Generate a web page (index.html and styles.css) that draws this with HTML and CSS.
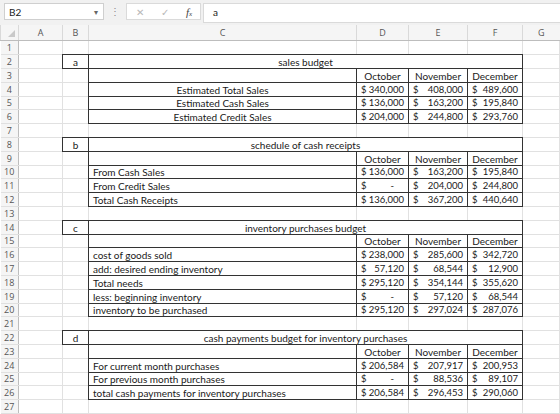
FILE: index.html
```html
<!DOCTYPE html>
<html lang="en">
<head>
    <meta charset="UTF-8">
    <title>Budget - Sheet1</title>
    <link rel="stylesheet" href="styles.css">
</head>
<body>
    <div class="formula-bar">
        <div class="name-box"><span>B2</span><span class="arrow">&#9662;</span></div>
        <div class="dots">&#8942;</div>
        <div class="fx-box">
            <span class="cancel">&#10005;</span>
            <span class="enter">&#10003;</span>
            <span class="fx"><i>f</i><sub>x</sub></span>
        </div>
        <div class="formula-input">a</div>
    </div>

    <table class="sheet">
        <colgroup>
            <col class="c-head">
            <col class="c-a">
            <col class="c-b">
            <col class="c-c">
            <col class="c-d">
            <col class="c-e">
            <col class="c-f">
            <col>
        </colgroup>
        <thead>
            <tr>
                <th class="corner"><span class="tri"></span></th>
                <th>A</th><th>B</th><th>C</th><th>D</th><th>E</th><th>F</th><th>G</th>
            </tr>
        </thead>
        <tbody>
            <tr><th>1</th><td></td><td></td><td></td><td></td><td></td><td></td><td></td></tr>

            <!-- a: sales budget -->
            <tr><th>2</th><td></td><td class="bx ctr">a</td><td class="bx ctr" colspan="4">sales budget</td><td></td></tr>
            <tr><th>3</th><td></td><td></td><td class="bx"></td><td class="bx ctr">October</td><td class="bx ctr">November</td><td class="bx ctr">December</td><td></td></tr>
            <tr><th>4</th><td></td><td></td><td class="bx ctr">Estimated Total Sales</td><td class="bx num"><span class="cur">$</span>340,000</td><td class="bx num"><span class="cur">$</span>408,000</td><td class="bx num"><span class="cur">$</span>489,600</td><td></td></tr>
            <tr><th>5</th><td></td><td></td><td class="bx ctr">Estimated Cash Sales</td><td class="bx num"><span class="cur">$</span>136,000</td><td class="bx num"><span class="cur">$</span>163,200</td><td class="bx num"><span class="cur">$</span>195,840</td><td></td></tr>
            <tr><th>6</th><td></td><td></td><td class="bx ctr">Estimated Credit Sales</td><td class="bx num"><span class="cur">$</span>204,000</td><td class="bx num"><span class="cur">$</span>244,800</td><td class="bx num"><span class="cur">$</span>293,760</td><td></td></tr>
            <tr><th>7</th><td></td><td></td><td></td><td></td><td></td><td></td><td></td></tr>

            <!-- b: schedule of cash receipts -->
            <tr><th>8</th><td></td><td class="bx ctr">b</td><td class="bx ctr" colspan="4">schedule of cash receipts</td><td></td></tr>
            <tr><th>9</th><td></td><td></td><td class="bx"></td><td class="bx ctr">October</td><td class="bx ctr">November</td><td class="bx ctr">December</td><td></td></tr>
            <tr><th>10</th><td></td><td></td><td class="bx lbl">From Cash Sales</td><td class="bx num"><span class="cur">$</span>136,000</td><td class="bx num"><span class="cur">$</span>163,200</td><td class="bx num"><span class="cur">$</span>195,840</td><td></td></tr>
            <tr><th>11</th><td></td><td></td><td class="bx lbl">From Credit Sales</td><td class="bx num"><span class="cur">$</span><span class="dash">-</span></td><td class="bx num"><span class="cur">$</span>204,000</td><td class="bx num"><span class="cur">$</span>244,800</td><td></td></tr>
            <tr><th>12</th><td></td><td></td><td class="bx lbl">Total Cash Receipts</td><td class="bx num"><span class="cur">$</span>136,000</td><td class="bx num"><span class="cur">$</span>367,200</td><td class="bx num"><span class="cur">$</span>440,640</td><td></td></tr>
            <tr><th>13</th><td></td><td></td><td></td><td></td><td></td><td></td><td></td></tr>

            <!-- c: inventory purchases budget -->
            <tr><th>14</th><td></td><td class="bx ctr">c</td><td class="bx ctr" colspan="4">inventory purchases budget</td><td></td></tr>
            <tr><th>15</th><td></td><td></td><td class="bx"></td><td class="bx ctr">October</td><td class="bx ctr">November</td><td class="bx ctr">December</td><td></td></tr>
            <tr><th>16</th><td></td><td></td><td class="bx lbl">cost of goods sold</td><td class="bx num"><span class="cur">$</span>238,000</td><td class="bx num"><span class="cur">$</span>285,600</td><td class="bx num"><span class="cur">$</span>342,720</td><td></td></tr>
            <tr><th>17</th><td></td><td></td><td class="bx lbl">add: desired ending inventory</td><td class="bx num"><span class="cur">$</span>57,120</td><td class="bx num"><span class="cur">$</span>68,544</td><td class="bx num"><span class="cur">$</span>12,900</td><td></td></tr>
            <tr><th>18</th><td></td><td></td><td class="bx lbl">Total needs</td><td class="bx num"><span class="cur">$</span>295,120</td><td class="bx num"><span class="cur">$</span>354,144</td><td class="bx num"><span class="cur">$</span>355,620</td><td></td></tr>
            <tr><th>19</th><td></td><td></td><td class="bx lbl">less: beginning inventory</td><td class="bx num"><span class="cur">$</span><span class="dash">-</span></td><td class="bx num"><span class="cur">$</span>57,120</td><td class="bx num"><span class="cur">$</span>68,544</td><td></td></tr>
            <tr><th>20</th><td></td><td></td><td class="bx lbl">inventory to be purchased</td><td class="bx num"><span class="cur">$</span>295,120</td><td class="bx num"><span class="cur">$</span>297,024</td><td class="bx num"><span class="cur">$</span>287,076</td><td></td></tr>
            <tr><th>21</th><td></td><td></td><td></td><td></td><td></td><td></td><td></td></tr>

            <!-- d: cash payments budget -->
            <tr><th>22</th><td></td><td class="bx ctr">d</td><td class="bx ctr" colspan="4">cash payments budget for inventory purchases</td><td></td></tr>
            <tr><th>23</th><td></td><td></td><td class="bx"></td><td class="bx ctr">October</td><td class="bx ctr">November</td><td class="bx ctr">December</td><td></td></tr>
            <tr><th>24</th><td></td><td></td><td class="bx lbl">For current month purchases</td><td class="bx num"><span class="cur">$</span>206,584</td><td class="bx num"><span class="cur">$</span>207,917</td><td class="bx num"><span class="cur">$</span>200,953</td><td></td></tr>
            <tr><th>25</th><td></td><td></td><td class="bx lbl">For previous month purchases</td><td class="bx num"><span class="cur">$</span><span class="dash">-</span></td><td class="bx num"><span class="cur">$</span>88,536</td><td class="bx num"><span class="cur">$</span>89,107</td><td></td></tr>
            <tr><th>26</th><td></td><td></td><td class="bx lbl">total cash payments for inventory purchases</td><td class="bx num"><span class="cur">$</span>206,584</td><td class="bx num"><span class="cur">$</span>296,453</td><td class="bx num"><span class="cur">$</span>290,060</td><td></td></tr>
            <tr><th>27</th><td></td><td></td><td></td><td></td><td></td><td></td><td></td></tr>
        </tbody>
    </table>
</body>
</html>
```

FILE: styles.css
```css
body {
    margin: 0;
    font-family: Lato, 'Liberation Sans', sans-serif;
    background-color: white;
    color: #1a1a1a;
    overflow: hidden;
}

/* formula bar */
.formula-bar {
    display: flex;
    align-items: flex-start;
    height: 25px;
    padding: 3px 0 0 4px;
    box-sizing: border-box;
    background-color: #f1f1f1;
    font-size: 10px;
}
.name-box {
    width: 100px;
    height: 17px;
    display: flex;
    align-items: center;
    justify-content: space-between;
    padding: 0 5px 0 4px;
    box-sizing: border-box;
    background-color: white;
    border: 1px solid #cfcfcf;
}
.arrow {
    color: #666;
    font-size: 8px;
}
.dots {
    width: 22px;
    line-height: 17px;
    text-align: center;
    color: #8a8a8a;
}
.fx-box {
    width: 75px;
    height: 17px;
    display: flex;
    align-items: center;
    gap: 15px;
    padding-left: 9px;
    box-sizing: border-box;
    background-color: white;
    border: 1px solid #dadada;
}
.cancel, .enter {
    color: #b8b8b8;
    width: 10px;
}
.fx {
    color: #444;
    font-family: 'Liberation Serif', serif;
    font-size: 11px;
}
.fx sub {
    font-size: 7px;
    font-style: italic;
    vertical-align: 0;
}
.formula-input {
    flex: 1;
    height: 18px;
    margin-left: 2px;
    padding-left: 9px;
    line-height: 17px;
    background-color: white;
    border: 1px solid #dadada;
    border-right: none;
}

/* grid */
.sheet {
    width: 560px;
    table-layout: fixed;
    border-collapse: collapse;
    font-size: 10px;
}
.c-head { width: 18px; }
.c-a { width: 44px; }
.c-b { width: 26px; }
.c-c { width: 268px; }
.c-d { width: 52px; }
.c-e { width: 59px; }
.c-f { width: 55px; }

.sheet th {
    font-family: 'Open Sans', sans-serif;
    font-weight: normal;
    font-size: 9px;
    line-height: 10px;
    color: #555;
    background-color: #f5f5f5;
    padding: 0;
}
.sheet thead th {
    height: 15px;
    border-left: 1px solid #d9d9d9;
    border-bottom: 1px solid #bdbdbd;
}
.sheet tbody th {
    border-right: 1px solid #bdbdbd;
    border-bottom: 1px solid #e0e0e0;
}
.corner {
    position: relative;
}
.tri {
    position: absolute;
    right: 3px;
    bottom: 3px;
    border-left: 7px solid transparent;
    border-bottom: 7px solid #c9c9c9;
}

/* rows average 13.8px: four of 14px, then one of 13px */
.sheet tbody tr {
    height: 14px;
}
.sheet tbody tr:nth-child(5n) {
    height: 13px;
}
.sheet td {
    border: 1px solid #e1e1e1;
    padding: 0 4px;
    line-height: 10px;
    white-space: nowrap;
    overflow: hidden;
    vertical-align: middle;
}

/* double wins over solid when collapsed borders meet, and paints solid at 1px */
.sheet td.bx {
    border: 1px double #333;
}
.ctr {
    text-align: center;
}
.lbl {
    text-align: left;
}
.num {
    text-align: right;
    font-size: 9.5px;
    padding: 0 5px 0 5px;
}
.cur {
    float: left;
}
.dash {
    margin-right: 10px;
}
```
